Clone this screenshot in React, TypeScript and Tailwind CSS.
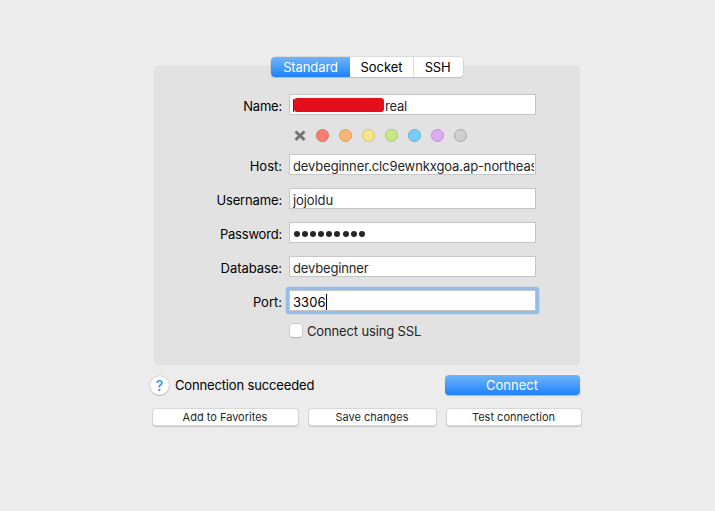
import type { ReactNode } from "react";

const colors = [
  "bg-[#fa7f70] border-[#d66d60]",
  "bg-[#fdb574] border-[#d89b64]",
  "bg-[#fae688] border-[#d2c274]",
  "bg-[#c3ea86] border-[#a2c56f]",
  "bg-[#7acefb] border-[#68add3]",
  "bg-[#ddacf3] border-[#b990cc]",
  "bg-[#cfcfcf] border-[#a9a9a9]",
];

function Row({ label, tracking, className = "", focused = false, children }: {
  label: string;
  tracking: string;
  className?: string;
  focused?: boolean;
  children?: ReactNode;
}) {
  return (
    <div className={`flex h-[21px] ${className}`}>
      <div className={`mr-[7px] w-[127px] pt-[2px] text-right leading-5 ${tracking}`}>{label}</div>
      <div
        className={`flex h-[21px] w-[247px] items-center overflow-hidden border border-[#c6c6c6] bg-white pl-[3px] pr-px ${
          focused ? "rounded-[1px] shadow-[0_0_0_3px_#94bdea,0_0_0_3.5px_#b4cbe6]" : ""
        }`}
      >
        <div className="flex w-full items-center overflow-hidden whitespace-nowrap pt-[2px] leading-[18px] text-[#262626]">
          {children}
        </div>
      </div>
    </div>
  );
}

function Button({ className, children }: { className: string; children: ReactNode }) {
  return (
    <button
      className={`h-[18px] rounded-[4px] border border-t-[#d8d8d8] border-x-[#d2d2d2] border-b-[#dddddd] bg-white text-center text-[11px] leading-[17px] text-[#262626] shadow-[0_1px_0_#c4c4c4] ${className}`}
    >
      {children}
    </button>
  );
}

export default function App() {
  return (
    <main className="h-[511px] w-[715px] overflow-hidden bg-[#ececec] pl-[150px] pt-[66px] font-[Inter,sans-serif] text-[13px] text-black">
      <section className="ml-1 h-[299px] w-[426px] rounded-[4px] border border-[#dedede] bg-[#e2e2e2]">
        <div className="-mt-[10px] ml-[116px] flex h-5 w-[192px] rounded-[4px] bg-white text-center leading-5 shadow-[0_0_0_0.5px_#cacaca,0_1px_1px_#b8b8b8]">
          <div className="w-[79px] rounded-l-[4px] bg-linear-to-b from-[#6eb5f8] to-[#1a80fc] tracking-[-0.1px] text-white">Standard</div>
          <div className="w-[64px] border-r border-[#dddddd] tracking-[-0.05px]">Socket</div>
          <div className="w-[49px] pr-[2px] tracking-[-0.2px]">SSH</div>
        </div>

        <Row label="Name:" tracking="tracking-[-0.2px]" className="mt-[17px]">
          <span className="flex h-[18px] items-center">
            <span className="h-[13px] w-px bg-[#493535]" />
            <span className="-mt-[2px] h-[14px] w-[90px] rounded-[3px] bg-[#e3101b]" />
          </span>
          <span className="ml-px tracking-[-0.2px]">real</span>
        </Row>

        <div className="ml-[139px] mt-[14px] flex h-[13px] items-center">
          <svg className="mr-[10.4px] h-3 w-3" viewBox="0 0 12 12" fill="none" stroke="#747474" strokeWidth="3">
            <path d="M1.5 1.5 10.5 9.9M10.5 1.5 1.5 9.9" />
          </svg>
          <div className="flex gap-[10px]">
            {colors.map((color) => (
              <span key={color} className={`h-[13px] w-[13px] rounded-full border ${color}`} />
            ))}
          </div>
        </div>

        <div className="mt-3 flex flex-col gap-[13px]">
          <Row label="Host:" tracking="tracking-[0px]">
            <span className="tracking-[-0.11px]">devbeginner.clc9ewnkxgoa.ap-northeast</span>
          </Row>
          <Row label="Username:" tracking="tracking-[-0.15px]">
            <span className="tracking-[-0.1px]">jojoldu</span>
          </Row>
          <Row label="Password:" tracking="tracking-[-0.2px]">
            <span className="ml-px flex gap-[2.1px]">
              {Array.from({ length: 9 }, (_, i) => (
                <span key={i} className="h-[6px] w-[6px] rounded-full bg-[#262626]" />
              ))}
            </span>
          </Row>
          <Row label="Database:" tracking="tracking-[-0.05px]">
            <span className="tracking-[-0.15px]">devbeginner</span>
          </Row>
          <Row label="Port:" tracking="tracking-[0px]" focused>
            <span className="tracking-[0.05px] text-black">3306</span>
            <span className="h-4 w-px bg-black" />
          </Row>
        </div>

        <label className="ml-[135px] mt-3 flex h-4 items-center">
          <span className="-mt-px h-[13px] w-[12px] rounded-[3px] bg-white shadow-[0_0_0_0.5px_#bcbcbc,0_0.5px_1px_#aaaaaa]" />
          <span className="ml-[5px] pt-px tracking-[-0.14px] text-[#262626]">Connect using SSL</span>
        </label>
      </section>

      <div className="mt-[10px] flex h-5 items-center">
        <button className="h-[19px] w-[19px] rounded-full bg-white text-center text-[14px] font-medium leading-[19px] text-[#2490f8] shadow-[0_0_0_0.5px_#bcbcbc,0_1px_1px_#b8b8b8]">?</button>
        <span className="ml-[6px] w-[270px] pt-px tracking-[-0.15px]">Connection succeeded</span>
        <button className="h-5 w-[135px] rounded-[4px] bg-linear-to-b from-[#6eb5f8] to-[#1a80fc] pr-px text-center leading-5 text-white shadow-[0_1px_1px_#b8b8b8]">Connect</button>
      </div>

      <div className="ml-[2px] mt-[13px] flex h-[18px]">
        <Button className="w-[147px] pr-px">Add to Favorites</Button>
        <Button className="ml-[9px] w-[129px] pr-px">Save changes</Button>
        <Button className="ml-[9px] w-[136px] pr-px">Test connection</Button>
      </div>
    </main>
  );
}
